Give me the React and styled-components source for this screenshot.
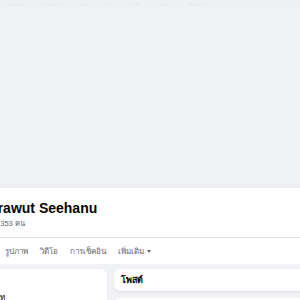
import React from 'react';
import styled, { createGlobalStyle } from 'styled-components';

const Global = createGlobalStyle`
  html, body {
    margin: 0;
    padding: 0;
    background: #f0f2f5;
    font-family: "Liberation Sans", "Noto Sans", "DejaVu Sans", sans-serif;
    overflow: hidden;
  }
`;

const Page = styled.div`
  width: 300px;
  height: 300px;
  overflow: hidden;
  display: flex;
  flex-direction: column;
`;

const TopStrip = styled.div`
  height: 8px;
  flex-shrink: 0;
  background: #eff0f4;
  display: flex;
  align-items: center;
  gap: 18px;
  padding: 0 8px;
`;

const Ghost = styled.span`
  display: block;
  width: ${p => p.w}px;
  height: 3px;
  border-radius: 2px;
  background: #ebecf0;
`;

const Cover = styled.div`
  height: 180px;
  flex-shrink: 0;
  background: linear-gradient(#f0f2f5 0%, #f0f2f5 96%, #ebedf0 100%);
`;

// wide inner column, centred so it spills off both edges
const Stage = styled.div`
  display: flex;
  justify-content: center;
`;

const Inner = styled.div`
  width: 360px;
  flex-shrink: 0;
`;

const HeaderBox = styled.div`
  background: #fff;
  display: flex;
  justify-content: center;
`;

const Identity = styled.div`
  padding: 12px 16px 0 16px;
  height: 37px;
  border-bottom: 1px solid #dfe1e5;
`;

const Name = styled.h1`
  margin: 0;
  font-size: 14px;
  line-height: 17px;
  font-weight: 700;
  color: #050505;
`;

const Friends = styled.div`
  margin-top: 1px;
  padding-left: 8px;
  font-size: 7.5px;
  line-height: 11px;
  color: #65676b;
`;

const Tabs = styled.nav`
  display: flex;
  align-items: center;
  height: 26px;
  padding-left: 29px;
`;

const Tab = styled.span`
  display: flex;
  align-items: center;
  gap: 3px;
  padding: 0 6px;
  font-size: 8px;
  font-weight: 400;
  color: #65676b;
  white-space: nowrap;
`;

const Caret = styled.span`
  width: 0;
  height: 0;
  border-left: 2.5px solid transparent;
  border-right: 2.5px solid transparent;
  border-top: 3px solid #65676b;
`;

const Columns = styled.div`
  display: grid;
  grid-template-columns: 121px 1fr;
  gap: 7px;
  padding: 5px 16px 0;
`;

const Stack = styled.div`
  display: flex;
  flex-direction: column;
  gap: 7px;
`;

const Card = styled.div`
  background: #fff;
  border-radius: 6px;
  box-shadow: 0 1px 2px rgba(0, 0, 0, 0.1);
  min-height: ${p => p.h || 0}px;
  padding: ${p => p.pad || '0'};
  box-sizing: border-box;
`;

const CardTitle = styled.div`
  font-size: 9px;
  font-weight: 700;
  color: #050505;
  line-height: 22px;
`;

const Intro = styled.div`
  padding: 22px 0 0 14px;
  font-size: 8px;
  color: #050505;
`;

const App = () => (
  <Page>
    <Global />
    <TopStrip>
      <Ghost w={16} />
      <Ghost w={20} />
      <Ghost w={8} />
      <Ghost w={6} />
      <Ghost w={10} />
      <Ghost w={12} />
      <Ghost w={18} />
    </TopStrip>
    <Cover />
    <HeaderBox>
      <Inner>
        <Identity>
          <Name>Jirawut Seehanu</Name>
          <Friends>1,353 คน</Friends>
        </Identity>
        <Tabs>
          <Tab>รูปภาพ</Tab>
          <Tab>วิดีโอ</Tab>
          <Tab>การเช็คอิน</Tab>
          <Tab>
            เพิ่มเติม
            <Caret />
          </Tab>
        </Tabs>
      </Inner>
    </HeaderBox>
    <Stage>
      <Inner>
        <Columns>
          <Card h={200}>
            <Intro>ท</Intro>
          </Card>
          <Stack>
            <Card pad="0 7px">
              <CardTitle>โพสต์</CardTitle>
            </Card>
            <Card h={120} />
          </Stack>
        </Columns>
      </Inner>
    </Stage>
  </Page>
);

export default App;
